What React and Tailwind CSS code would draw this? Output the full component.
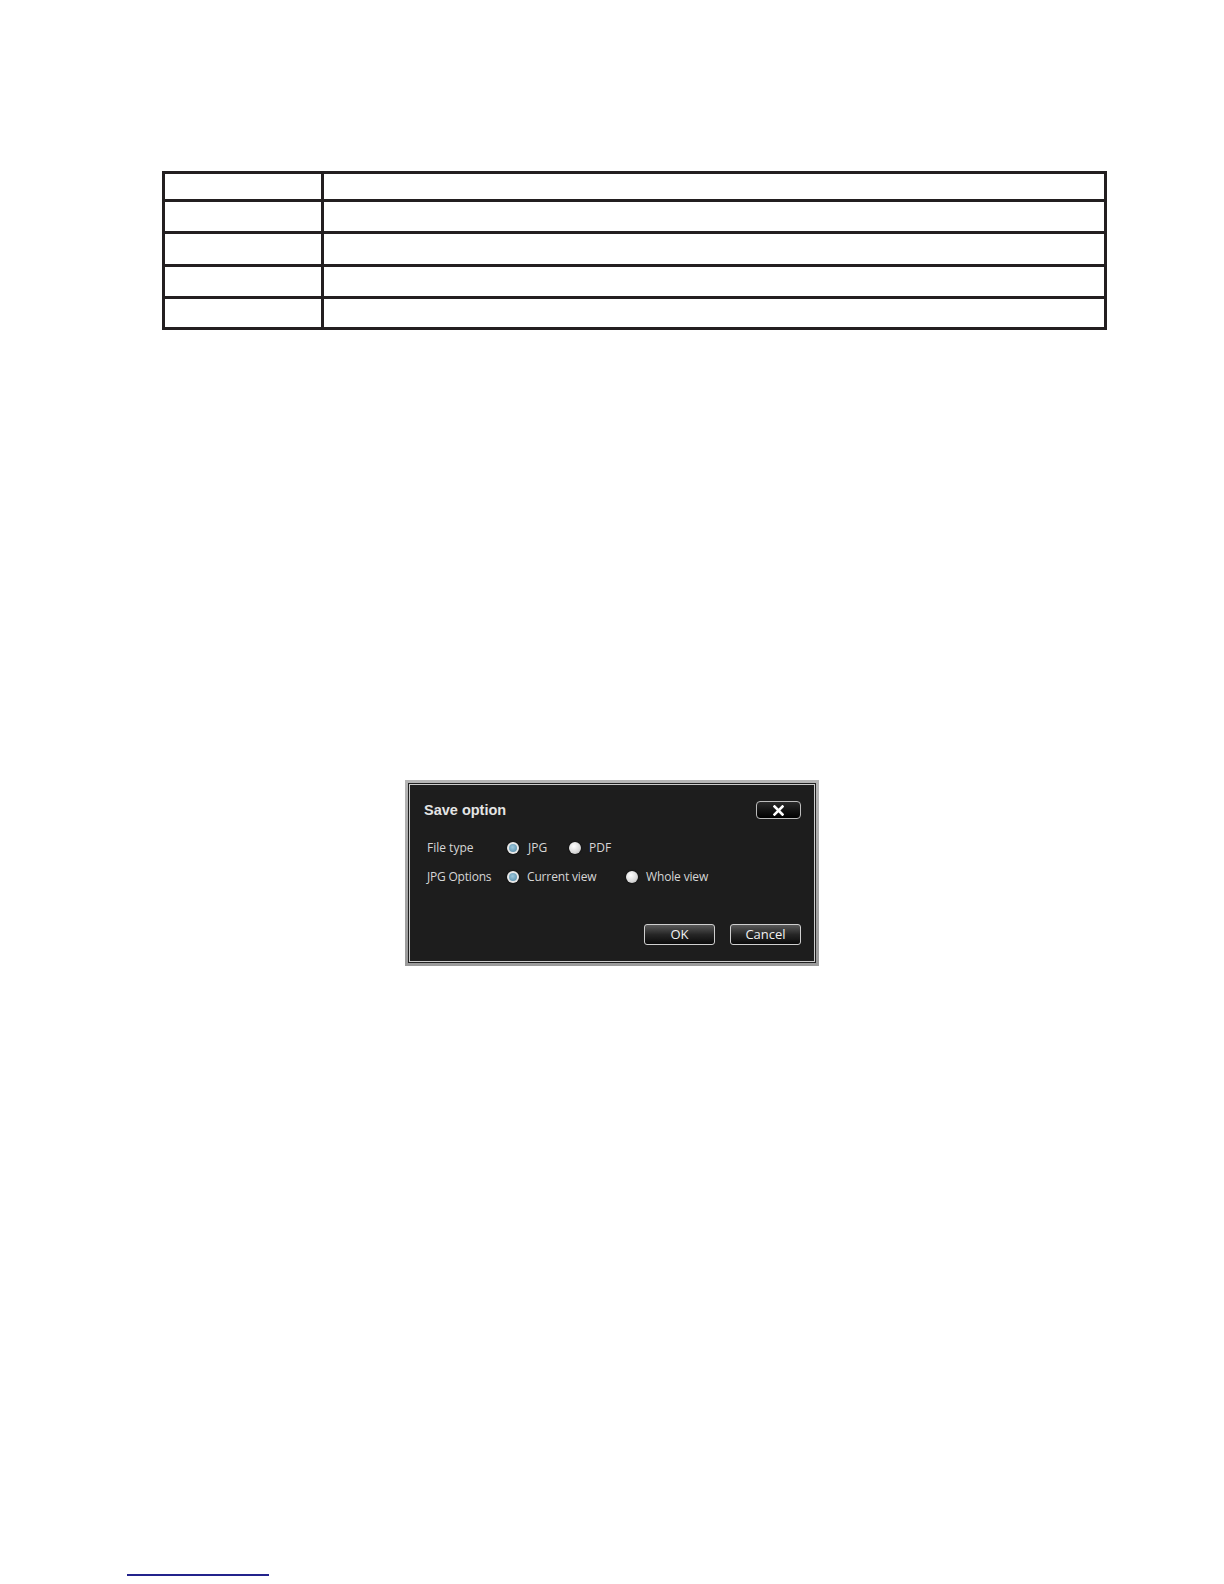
import React from "react";

function Radio({ checked }) {
  return checked ? (
    <span className="inline-block w-[12px] h-[12px] rounded-full bg-[#e8e8e8] p-[2px] shrink-0 shadow-[0_0_2px_#000]">
      <span className="block w-full h-full rounded-full bg-[radial-gradient(circle_at_45%_40%,#9cc7dc,#4f87a5)]"></span>
    </span>
  ) : (
    <span className="inline-block w-[12px] h-[12px] rounded-full bg-[radial-gradient(circle_at_40%_35%,#ffffff,#d8d8d8_60%,#a8a8a8)] shrink-0 shadow-[0_0_2px_#000]"></span>
  );
}

function Btn({ children }) {
  return (
    <div className="w-[71px] h-[21px] rounded-[3px] border border-[#cfcfcf] bg-[linear-gradient(#5a5a5a,#262626_50%,#0a0a0a)] flex items-center justify-center text-[13px] leading-none text-[#f2f2f2]">
      {children}
    </div>
  );
}

export default function App() {
  const rows = [25, 29, 30, 29, 28];
  return (
    <div className="w-[1224px] h-[1584px] bg-white relative overflow-hidden" style={{ fontFamily: '"Open Sans", "Noto Sans", sans-serif' }}>
      <div className="pt-[171px] pl-[162px]">
        <div className="w-[945px] border-[3px] border-[#231f20]">
          {rows.map((h, i) => (
            <div key={i} className={i === 0 ? "flex" : "flex border-t-[3px] border-[#231f20]"}>
              <div className="w-[159px] border-r-[3px] border-[#231f20]" style={{ height: h }}></div>
              <div className="flex-1"></div>
            </div>
          ))}
        </div>
      </div>

      <div className="mt-[450px] ml-[405px] w-[414px] h-[186px] bg-[linear-gradient(#b5b5b5,#9a9a9a)] p-[3px]">
        <div className="w-full h-full border border-[#202020]">
          <div className="w-full h-full border border-[#cdcdcd] bg-[#1d1d1d] flex flex-col pl-[14px] pr-[13px]">
            <div className="mt-[16px] h-[18px] flex items-center justify-between">
              <div className="text-[14.5px] font-bold text-[#e4e4e4] leading-none" style={{ fontFamily: '"Liberation Sans", Arial, sans-serif' }}>Save option</div>
              <div className="w-[45px] h-[18px] rounded-[4px] border border-[#bdbdbd] bg-[linear-gradient(#2a2a2a,#000)] flex items-center justify-center">
                <svg width="11" height="11" viewBox="0 0 11 11">
                  <path d="M1.5 1.5 L9.5 9.5 M9.5 1.5 L1.5 9.5" stroke="#ffffff" strokeWidth="2.6" strokeLinecap="square" />
                </svg>
              </div>
            </div>

            <div className="mt-[21px] h-[16px] flex items-center pl-[3px] text-[12px] text-[#d6d6d6] leading-none">
              <div className="w-[80px]">File type</div>
              <div className="w-[62px] flex items-center">
                <Radio checked />
                <span className="ml-[9px]">JPG</span>
              </div>
              <div className="flex items-center">
                <Radio />
                <span className="ml-[8px]">PDF</span>
              </div>
            </div>

            <div className="mt-[13px] h-[16px] flex items-center pl-[3px] text-[12px] text-[#d6d6d6] leading-none">
              <div className="w-[80px] tracking-[-0.2px]">JPG Options</div>
              <div className="w-[119px] flex items-center">
                <Radio checked />
                <span className="ml-[8px] tracking-[-0.15px]">Current view</span>
              </div>
              <div className="flex items-center">
                <Radio />
                <span className="ml-[8px] tracking-[-0.15px]">Whole view</span>
              </div>
            </div>

            <div className="mt-[39px] flex justify-end gap-[15px]">
              <Btn>OK</Btn>
              <Btn>Cancel</Btn>
            </div>
          </div>
        </div>
      </div>

      <div className="mt-[608px] ml-[127px] w-[142px] h-[2px] bg-[#23238c]"></div>
    </div>
  );
}
